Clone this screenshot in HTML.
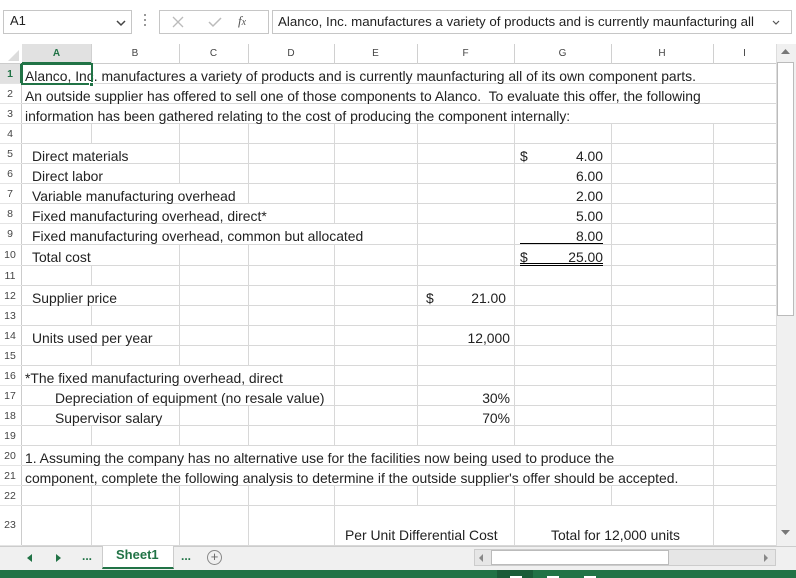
<!DOCTYPE html>
<html><head><meta charset="utf-8"><style>
*{margin:0;padding:0;box-sizing:border-box}
body{width:796px;height:578px;overflow:hidden;background:#fff;font-family:"Liberation Sans",sans-serif;font-size:13.9px;color:#222;position:relative}
.a{position:absolute}
.t{position:absolute;white-space:nowrap;line-height:20px}
.hl{position:absolute;height:1px;background:#d8d8d8}
.vl{position:absolute;width:1px;background:#d8d8d8}
.ch{position:absolute;top:44px;height:19px;line-height:19px;text-align:center;font-size:10px;color:#444}
.rn{position:absolute;left:0;width:20px;text-align:center;font-size:10.5px;color:#444}
</style></head><body>
<div class="a" style="left:0;top:0;width:796px;height:44px;background:#fff"></div>
<div class="a" style="left:3px;top:10px;width:129px;height:24px;border:1px solid #c6c6c6"></div>
<div class="t" style="left:10px;top:11px;font-size:13px">A1</div>
<svg class="a" style="left:116px;top:19px" width="10" height="8"><path d="M1 2 L5 6 L9 2" stroke="#444" stroke-width="1.5" fill="none"/></svg>
<div class="a" style="left:144px;top:14px;width:2px;height:2px;background:#999;box-shadow:0 5px #999,0 10px #999"></div>
<div class="a" style="left:159px;top:10px;width:110px;height:24px;border:1px solid #c6c6c6"></div>
<svg class="a" style="left:172px;top:16px" width="12" height="12"><path d="M1 1 L11 11 M11 1 L1 11" stroke="#bbb" stroke-width="1.3"/></svg>
<svg class="a" style="left:208px;top:16px" width="14" height="12"><path d="M1 6 L5 10 L13 2" stroke="#bbb" stroke-width="1.5" fill="none"/></svg>
<div class="t" style="left:238px;top:11px;font-family:'Liberation Serif',serif;font-style:italic;font-size:13px;color:#555">f<span style="font-size:10px">x</span></div>
<div class="a" style="left:272px;top:10px;width:520px;height:24px;border:1px solid #c6c6c6"></div>
<div class="t" style="left:278px;top:12px;width:490px;overflow:hidden;font-size:13.3px">Alanco, Inc. manufactures a variety of products and is currently maunfacturing all</div>
<svg class="a" style="left:772px;top:20px" width="8" height="6"><path d="M1 1 L4 4 L7 1" stroke="#555" stroke-width="1.2" fill="none"/></svg>

<div class="a" style="left:0;top:44px;width:776px;height:20px;background:#fff;border-bottom:1px solid #ccc"></div>
<div class="a" style="left:22px;top:44px;width:69px;height:20px;background:#e1e1e1;border-bottom:2px solid #217346"></div>
<svg class="a" style="left:6px;top:50px" width="14" height="12"><path d="M13 0 L13 11 L2 11 Z" fill="#dcdcdc"/></svg>
<div class="a" style="left:0;top:64px;width:22px;height:482px;background:#fff;border-right:1px solid #ccc"></div>
<div class="a" style="left:0;top:64px;width:22px;height:20px;background:#e1e1e1;border-right:2px solid #217346"></div>
<div id="g"></div>

<div class="a" style="left:776px;top:44px;width:20px;height:502px;background:#f0f0f0;border-left:1px solid #ddd"></div>
<div class="a" style="left:777px;top:62px;width:17px;height:254px;background:#fff;border:1px solid #bbb"></div>
<svg class="a" style="left:781px;top:49px" width="9" height="6"><path d="M0 5 L4.5 0 L9 5Z" fill="#777"/></svg>
<svg class="a" style="left:781px;top:530px" width="9" height="6"><path d="M0 0 L4.5 5 L9 0Z" fill="#777"/></svg>

<div class="a" style="left:0;top:546px;width:796px;height:24px;background:#f0f0f0;border-top:1px solid #ccc"></div>
<svg class="a" style="left:27px;top:554px" width="6" height="8"><path d="M5 0 L0 4 L5 8Z" fill="#217346"/></svg>
<svg class="a" style="left:56px;top:554px" width="6" height="8"><path d="M0 0 L5 4 L0 8Z" fill="#217346"/></svg>
<div class="t" style="left:82px;top:546px;color:#217346;font-weight:bold;font-size:12px">...</div>
<div class="a" style="left:102px;top:546px;width:72px;height:23px;background:#fff;border-bottom:2px solid #217346;border-left:1px solid #ccc;border-right:1px solid #ccc"></div>
<div class="t" style="left:116px;top:545px;color:#217346;font-weight:bold;font-size:13px">Sheet1</div>
<div class="t" style="left:181px;top:546px;color:#217346;font-weight:bold;font-size:12px">...</div>
<div class="a" style="left:207px;top:550px;width:15px;height:15px;border:1px solid #888;border-radius:50%;text-align:center;line-height:12px;font-size:13px;color:#666">+</div>
<div class="a" style="left:474px;top:549px;width:302px;height:17px;background:#e6e6e6;border:1px solid #ccc"></div>
<div class="a" style="left:491px;top:550px;width:178px;height:15px;background:#fff;border:1px solid #bbb"></div>
<svg class="a" style="left:479px;top:554px" width="5" height="8"><path d="M4 0 L0 4 L4 8Z" fill="#888"/></svg>
<svg class="a" style="left:764px;top:554px" width="5" height="8"><path d="M0 0 L4 4 L0 8Z" fill="#888"/></svg>
<div class="a" style="left:0;top:570px;width:796px;height:8px;background:#217346"></div>
<div class="a" style="left:497px;top:570px;width:36px;height:8px;background:#1a5c38"></div>
<div class="a" style="left:510px;top:576px;width:12px;height:2px;background:#fff"></div>
<div class="a" style="left:547px;top:576px;width:12px;height:2px;background:#fff"></div>
<div class="a" style="left:584px;top:576px;width:12px;height:2px;background:#fff"></div>

<script>
var cols=[22,91,179,248,334,417,514,611,713,776];
var names="ABCDEFGHI";
var h='';
for(var i=0;i<9;i++){
  var c=i==0?'#217346;font-weight:bold':'#444';
  h+='<div class="ch" style="left:'+cols[i]+'px;width:'+(cols[i+1]-cols[i])+'px;color:'+c+'">'+names[i]+'</div>';
  if(i>0)h+='<div class="vl" style="left:'+cols[i]+'px;top:44px;height:20px;background:#d0d0d0"></div>';
}
var rows=[];var y=64;
for(var r=1;r<=23;r++){var hh=(r==9||r==10)?21:20;if(r==23)hh=40;rows.push([y,hh]);y+=hh;}
var sup={1:775,2:775,3:775,5:100,6:100,7:200,8:260,9:340,10:100,12:100,14:100,16:260,17:260,18:100,20:650,21:650,23:0};
for(var r=1;r<=23;r++){
  var ry=rows[r-1][0],rh=rows[r-1][1];
  h+='<div class="rn" style="top:'+ry+'px;height:'+rh+'px;line-height:'+(r==23?38:rh)+'px;'+(r==1?'color:#217346;font-weight:bold;background:#e1e1e1':'')+'">'+r+'</div>';
  h+='<div class="hl" style="left:22px;width:754px;top:'+(ry+rh-1)+'px"></div>';
  h+='<div class="hl" style="left:0;width:22px;top:'+(ry+rh-1)+'px;background:#e4e4e4"></div>';
  var s=sup[r]||0;
  for(var i=1;i<9;i++){
    var x=cols[i];
    if(x<=s)continue;
    if(r==23&&(x==417||x==611))continue;
    h+='<div class="vl" style="left:'+x+'px;top:'+ry+'px;height:'+rh+'px"></div>';
  }
}
function T(r,x,txt){var ry=rows[r-1][0];h+='<div class="t" style="left:'+x+'px;top:'+(ry+2)+'px">'+txt+'</div>';}
function R(r,right,txt){var ry=rows[r-1][0];h+='<div class="t" style="right:'+(796-right)+'px;top:'+(ry+2)+'px">'+txt+'</div>';}
T(1,25,'Alanco, Inc. manufactures a variety of products and is currently maunfacturing all of its own component parts.');
T(2,25,'An outside supplier has offered to sell one of those components to Alanco.&nbsp; To evaluate this offer, the following');
T(3,25,'information has been gathered relating to the cost of producing the component internally:');
T(5,32,'Direct materials');T(6,32,'Direct labor');T(7,32,'Variable manufacturing overhead');
T(8,32,'Fixed manufacturing overhead, direct*');T(9,32,'Fixed manufacturing overhead, common but allocated');
T(10,32,'Total cost');T(12,32,'Supplier price');T(14,32,'Units used per year');
T(16,25,'*The fixed manufacturing overhead, direct');T(17,55,'Depreciation of equipment (no resale value)');T(18,55,'Supervisor salary');
T(20,25,'1. Assuming the company has no alternative use for the facilities now being used to produce the');
T(21,25,'component, complete the following analysis to determine if the outside supplier\'s offer should be accepted.');
T(5,520,'$');R(5,603,'4.00');R(6,603,'6.00');R(7,603,'2.00');R(8,603,'5.00');R(9,603,'8.00');
T(10,520,'$');R(10,603,'25.00');
T(12,426,'$');R(12,506,'21.00');R(14,510,'12,000');R(17,510,'30%');R(18,510,'70%');
var y9=rows[8][0],y10=rows[9][0];
h+='<div class="a" style="left:520px;width:83px;top:'+(y9+19)+'px;height:1px;background:#000"></div>';
h+='<div class="a" style="left:520px;width:83px;top:'+(y10+18)+'px;height:1px;background:#000"></div>';
h+='<div class="a" style="left:520px;width:83px;top:'+(y10+20)+'px;height:1px;background:#000"></div>';
var y23=rows[22][0];
h+='<div class="t" style="left:345px;top:'+(y23+19)+'px">Per Unit Differential Cost</div>';
h+='<div class="t" style="left:551px;top:'+(y23+19)+'px">Total for 12,000 units</div>';
h+='<div class="a" style="left:21px;top:63px;width:72px;height:22px;border:2px solid #217346"></div>';
h+='<div class="a" style="left:89px;top:82px;width:5px;height:5px;background:#217346;border:1px solid #fff"></div>';
document.getElementById('g').innerHTML=h;
</script>
</body></html>
